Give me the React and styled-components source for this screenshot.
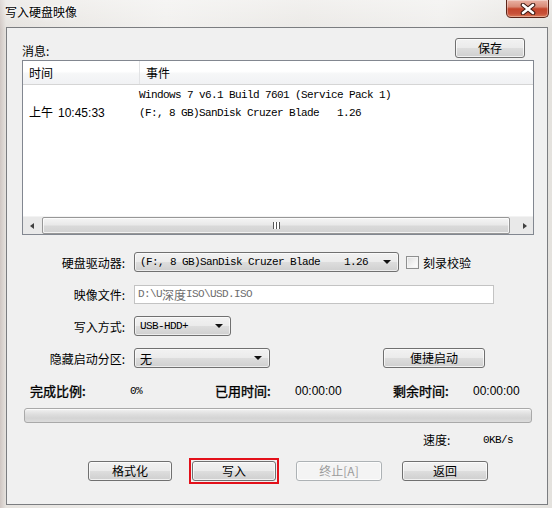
import React from 'react';
import styled, { createGlobalStyle } from 'styled-components';

const CJK = `"Noto Sans CJK SC", "Liberation Sans", sans-serif`;
const MONO = `"Liberation Mono", "Noto Sans CJK SC", monospace`;
const SANS = `"Liberation Sans", "Noto Sans CJK SC", sans-serif`;

const GlobalStyle = createGlobalStyle`
  html, body {
    margin: 0;
    padding: 0;
  }
  body {
    width: 552px;
    height: 508px;
    overflow: hidden;
    font-family: ${CJK};
    font-size: 12px;
    color: #000;
  }
`;

const App = () => {
    return (
        <>
            <GlobalStyle />
            <Window>
                <TitleBar>
                    <Title>写入硬盘映像</Title>
                    <CloseButton>
                        <svg width="18" height="12" viewBox="0 0 18 12">
                            <path d="M4 2 L14 10 M14 2 L4 10" stroke="#3b1710" strokeWidth="4.6" strokeLinecap="round" />
                            <path d="M4 2 L14 10 M14 2 L4 10" stroke="#fff" strokeWidth="2.6" strokeLinecap="round" />
                        </svg>
                    </CloseButton>
                </TitleBar>
                <Client>
                    <MessageHeader>
                        <Caption>消息:</Caption>
                        <Button $width={70}>保存</Button>
                    </MessageHeader>

                    <ListBox>
                        <ListHead>
                            <HeadCell $width={110}>时间</HeadCell>
                            <HeadCell>事件</HeadCell>
                        </ListHead>
                        <ListBody>
                            <TimeCell>
                                上午<Clock $gap={5}>10:45:33</Clock>
                            </TimeCell>
                            <EventCell>
                                <Mono>Windows 7 v6.1 Build 7601 (Service Pack 1)</Mono>
                                <Mono>(F:, 8 GB)SanDisk Cruzer Blade   1.26</Mono>
                            </EventCell>
                        </ListBody>
                        <HScroll>
                            <ScrollArrow $dir="left" />
                            <Track>
                                <Thumb>
                                    <Grip />
                                </Thumb>
                            </Track>
                            <ScrollArrow $dir="right" />
                        </HScroll>
                    </ListBox>

                    <Form>
                        <FormRow>
                            <FieldLabel>硬盘驱动器:</FieldLabel>
                            <Combo $width={265}>
                                <Mono>(F:, 8 GB)SanDisk Cruzer Blade    1.26</Mono>
                                <ComboArrow />
                            </Combo>
                            <CheckLabel>
                                <CheckBox />
                                刻录校验
                            </CheckLabel>
                        </FormRow>
                        <FormRow>
                            <FieldLabel>映像文件:</FieldLabel>
                            <PathInput>
                                <Mono>D:\U</Mono>深度<Mono>ISO\USD.ISO</Mono>
                            </PathInput>
                        </FormRow>
                        <FormRow>
                            <FieldLabel>写入方式:</FieldLabel>
                            <Combo $width={97}>
                                <Mono>USB-HDD+</Mono>
                                <ComboArrow />
                            </Combo>
                        </FormRow>
                        <FormRow>
                            <FieldLabel>隐藏启动分区:</FieldLabel>
                            <Combo $width={136}>
                                <span>无</span>
                                <ComboArrow />
                            </Combo>
                            <Button $width={102} $left={113}>便捷启动</Button>
                        </FormRow>
                    </Form>

                    <Stats>
                        <StatLabel>完成比例:</StatLabel>
                        <Mono>0%</Mono>
                        <StatLabel>已用时间:</StatLabel>
                        <Clock>00:00:00</Clock>
                        <StatLabel>剩余时间:</StatLabel>
                        <Clock>00:00:00</Clock>
                    </Stats>

                    <Progress />

                    <SpeedRow>
                        <span>速度:</span>
                        <Mono>0KB/s</Mono>
                    </SpeedRow>

                    <ActionRow>
                        <Button $width={84}>格式化</Button>
                        <Mark>
                            <Button $width={84}>写入</Button>
                        </Mark>
                        <Button $width={86} disabled>终止[A]</Button>
                        <Button $width={86}>返回</Button>
                    </ActionRow>
                </Client>
            </Window>
        </>
    );
};

export default App;

const Window = styled.div`
    width: 552px;
    height: 508px;
    box-sizing: border-box;
    padding: 0 4px 3px 6px;
    display: flex;
    flex-direction: column;
    background:
        linear-gradient(180deg, rgba(255, 255, 255, 0.35) 0, rgba(255, 255, 255, 0) 30px),
        linear-gradient(90deg, #cfc6c2 0, #e6e3df 6px, #f1f0ee 30%, #ebe9e6 55%, #f0efed 80%, #e4e2de 100%);
`;

const TitleBar = styled.div`
    height: 27px;
    display: flex;
    justify-content: space-between;
    align-items: flex-start;
`;

const Title = styled.div`
    margin: 4px 0 0 -1px;
    font-size: 12px;
    line-height: 16px;
    text-shadow: 0 0 6px #fff, 0 0 3px #fff;
`;

const CloseButton = styled.div`
    width: 43px;
    height: 18px;
    margin-right: -1px;
    box-sizing: border-box;
    border: 1px solid #5b2418;
    border-top: none;
    border-radius: 0 0 5px 5px;
    display: flex;
    align-items: center;
    justify-content: center;
    background: linear-gradient(180deg, #eab2a4 0%, #d98a76 40%, #c4452b 52%, #c8513a 80%, #dc7a55 100%);
    box-shadow: inset 0 0 0 1px rgba(255, 255, 255, 0.35);
`;

const Client = styled.div`
    flex: 1;
    display: flex;
    flex-direction: column;
    background: #f0f0f0;
    border: 1px solid #7b7d80;
    padding: 10px 13px 0 15px;
`;

const MessageHeader = styled.div`
    height: 19px;
    display: flex;
    justify-content: space-between;
    padding-right: 9px;
`;

const Caption = styled.span`
    align-self: flex-end;
    line-height: 14px;
    margin-bottom: -1px;
`;

const Button = styled.button`
    width: ${(p) => p.$width}px;
    height: 20px;
    margin-left: ${(p) => p.$left || 0}px;
    padding: 0;
    box-sizing: border-box;
    border: 1px solid ${(p) => (p.disabled ? '#adb2b5' : '#707070')};
    border-radius: 3px;
    font-family: ${CJK};
    font-size: 12px;
    line-height: 16px;
    color: ${(p) => (p.disabled ? '#9c9c9c' : '#000')};
    background: ${(p) =>
        p.disabled
            ? '#f4f4f4'
            : 'linear-gradient(180deg, #f2f2f2 0%, #ebebeb 48%, #dddddd 52%, #cfcfcf 100%)'};
    box-shadow: inset 0 0 0 1px rgba(255, 255, 255, 0.7);
`;

const Mark = styled.span`
    display: flex;
    margin: -3px;
    padding: 1px;
    border: 2px solid #e3101a;
`;

const ListBox = styled.div`
    margin-top: 3px;
    height: 175px;
    box-sizing: border-box;
    border: 1px solid #828790;
    background: #fff;
    display: flex;
    flex-direction: column;
`;

const ListHead = styled.div`
    height: 23px;
    display: flex;
    border-bottom: 1px solid #d5d5d5;
    background: linear-gradient(180deg, #fff 0%, #fff 45%, #f6f7f8 55%, #f1f2f4 100%);
`;

const HeadCell = styled.div`
    ${(p) => (p.$width ? `width: ${p.$width}px; border-right: 1px solid #e2e3e5;` : 'flex: 1;')}
    padding-left: 6px;
    line-height: 23px;
`;

const ListBody = styled.div`
    flex: 1;
    display: grid;
    grid-template-columns: 111px 1fr;
    align-content: start;
    padding-top: 1px;
`;

const TimeCell = styled.div`
    align-self: end;
    padding-left: 6px;
    line-height: 18px;
`;

const EventCell = styled.div`
    display: flex;
    flex-direction: column;
    padding-left: 5px;
    line-height: 18px;
`;

const Mono = styled.span`
    font-family: ${MONO};
    font-size: 11px;
    letter-spacing: -0.6px;
    white-space: pre;
`;

const Clock = styled.span`
    margin-left: ${(p) => p.$gap || 0}px;
    font-family: ${SANS};
    font-size: 12px;
`;

const HScroll = styled.div`
    height: 17px;
    display: flex;
    background: #e9e9e9;
    border-top: 1px solid #f3f3f3;
`;

const ScrollArrow = styled.div`
    width: 17px;
    display: flex;
    align-items: center;
    justify-content: center;
    &::after {
        content: '';
        border-top: 3.5px solid transparent;
        border-bottom: 3.5px solid transparent;
        ${(p) => (p.$dir === 'left' ? 'border-right: 4px solid #404040;' : 'border-left: 4px solid #404040;')}
    }
`;

const Track = styled.div`
    flex: 1;
    padding: 0 6px 0 2px;
    display: flex;
`;

const Thumb = styled.div`
    flex: 1;
    box-sizing: border-box;
    border: 1px solid #979797;
    border-radius: 2px;
    background: linear-gradient(180deg, #f5f5f5 0%, #e9e9e9 45%, #d9d9d9 55%, #d2d2d2 100%);
    box-shadow: inset 0 0 0 1px rgba(255, 255, 255, 0.7);
    display: flex;
    align-items: center;
    justify-content: center;
`;

const Grip = styled.div`
    width: 7px;
    height: 7px;
    background: repeating-linear-gradient(90deg, #555 0, #555 1px, #fff 1px, #fff 3px);
`;

const Form = styled.div`
    margin-top: 17px;
    display: flex;
    flex-direction: column;
    gap: 12px;
`;

const FormRow = styled.div`
    display: flex;
    align-items: center;
    height: 20px;
`;

const FieldLabel = styled.span`
    width: 103px;
    margin-right: 9px;
    text-align: right;
`;

const Combo = styled.div`
    width: ${(p) => p.$width}px;
    height: 20px;
    box-sizing: border-box;
    border: 1px solid #707070;
    border-radius: 3px;
    padding: 0 7px 0 5px;
    display: flex;
    align-items: center;
    justify-content: space-between;
    background: linear-gradient(180deg, #f2f2f2 0%, #ebebeb 48%, #dddddd 52%, #cfcfcf 100%);
    box-shadow: inset 0 0 0 1px rgba(255, 255, 255, 0.6);
`;

const ComboArrow = styled.span`
    border-left: 4px solid transparent;
    border-right: 4px solid transparent;
    border-top: 4px solid #111;
`;

const CheckLabel = styled.label`
    display: flex;
    align-items: center;
    gap: 4px;
    margin-left: 7px;
`;

const CheckBox = styled.span`
    width: 13px;
    height: 13px;
    box-sizing: border-box;
    border: 1px solid #8e8f8f;
    background: linear-gradient(135deg, #dcdcdc 0%, #f4f4f4 60%, #fff 100%);
    box-shadow: inset 0 0 0 1px #f4f4f4;
`;

const PathInput = styled.div`
    width: 360px;
    height: 19px;
    box-sizing: border-box;
    border: 1px solid #c3c3c3;
    background: #fff;
    padding-left: 3px;
    color: #6d6d6d;
    display: flex;
    align-items: center;
`;

const Stats = styled.div`
    margin-top: 13px;
    padding-left: 8px;
    height: 16px;
    display: grid;
    grid-template-columns: 100px 85px 80px 98px 80px auto;
    align-items: center;
`;

const StatLabel = styled.span`
    font-size: 13px;
    -webkit-text-stroke: 0.35px #000;
`;

const Progress = styled.div`
    margin: 11px 0 0 2px;
    width: 508px;
    height: 15px;
    box-sizing: border-box;
    border: 1px solid #a9a9a9;
    border-radius: 3px;
    background: linear-gradient(180deg, #f2f2f2 0%, #dedede 40%, #d4d4d4 70%, #dcdcdc 100%);
    box-shadow: inset 0 1px 0 #fafafa;
`;

const SpeedRow = styled.div`
    margin-top: 8px;
    padding-left: 401px;
    height: 16px;
    display: grid;
    grid-template-columns: 60px auto;
    align-items: center;
`;

const ActionRow = styled.div`
    margin-top: 14px;
    padding-left: 66px;
    display: flex;
    gap: 20px;
`;
